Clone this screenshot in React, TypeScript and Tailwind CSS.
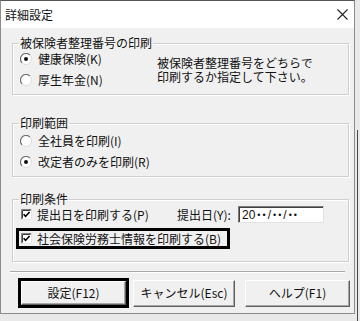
import React from "react";

function Radio({ checked }: { checked?: boolean }) {
  return (
    <svg width="12" height="12" viewBox="0 0 12 12" className="shrink-0">
      <circle cx="6" cy="6" r="5.5" fill="#ffffff" />
      <path d="M 2.1 9.9 A 5.5 5.5 0 0 1 9.9 2.1" stroke="#6e6e6e" strokeWidth="1.2" fill="none" />
      <path d="M 9.9 2.1 A 5.5 5.5 0 0 1 2.1 9.9" stroke="#dcdcdc" strokeWidth="1" fill="none" />
      {checked && <circle cx="6" cy="6" r="2" fill="#111" />}
    </svg>
  );
}

function Check() {
  return (
    <svg width="11" height="11" viewBox="0 0 11 11" className="shrink-0">
      <rect x="0" y="0" width="11" height="11" fill="#ffffff" />
      <path d="M0.5 10.5 V0.5 H10.5" stroke="#808080" fill="none" />
      <path d="M1.5 9.5 V1.5 H9.5" stroke="#3c3c3c" fill="none" />
      <path d="M10.5 0.5 V10.5 H0.5" stroke="#e6e6e6" fill="none" />
      <path d="M2.6 5.2 L4.6 7.4 L8.6 3" stroke="#000" strokeWidth="1.6" fill="none" />
    </svg>
  );
}

function Btn({ label, className }: { label: string; className: string }) {
  return (
    <div
      className={
        "flex items-center justify-center bg-[#f0f0f0] border border-t-white border-l-white border-r-[#5f5f5f] border-b-[#5f5f5f] shadow-[inset_-1px_-1px_0_#a8a8a8] text-[12px] leading-[14px] " +
        className
      }
    >
      {label}
    </div>
  );
}

export default function App() {
  return (
    <div className="w-[360px] h-[321px] bg-[#e9e9e9] flex font-['Noto_Sans_CJK_JP','Noto_Sans',sans-serif] text-[#111]">
      <div className="w-[355px] h-[314px] border border-[#8c8c8c] border-t-[#555] flex flex-col bg-[#f0f0f0]">
        {/* title bar */}
        <div className="h-[27px] bg-white flex items-center justify-between pl-[4px] pr-[6px] shrink-0">
          <span className="text-[12px] leading-[14px]">詳細設定</span>
          <svg width="11" height="11" viewBox="0 0 11 11">
            <path d="M0.5 0.5 L10.5 10.5 M10.5 0.5 L0.5 10.5" stroke="#222" strokeWidth="1.1" />
          </svg>
        </div>

        {/* group 1 */}
        <fieldset className="mt-[8px] ml-[11px] w-[337px] h-[59px] border border-[#cfcfcf] shadow-[inset_1px_1px_0_#fff,1px_1px_0_#fff] flex">
          <legend className="ml-[6px] px-[1px] text-[12px] leading-[14px]">被保険者整理番号の印刷</legend>
          <div className="flex w-full">
            <div className="w-[144px] pl-[7px] flex flex-col">
              <div className="h-[18px] flex items-center gap-[6px] text-[12px] leading-[14px]">
                <Radio checked />
                <span>健康保険(K)</span>
              </div>
              <div className="h-[18px] mt-[3px] flex items-center gap-[6px] text-[12px] leading-[14px]">
                <Radio />
                <span>厚生年金(N)</span>
              </div>
            </div>
            <div className="pt-[6px] text-[12px] leading-[14px] flex flex-col">
              <div className="h-[14px]">被保険者整理番号をどちらで</div>
              <div className="h-[14px]">印刷するか指定して下さい。</div>
            </div>
          </div>
        </fieldset>

        {/* group 2 */}
        <fieldset className="mt-[21px] ml-[11px] w-[337px] h-[61px] border border-[#cfcfcf] shadow-[inset_1px_1px_0_#fff,1px_1px_0_#fff]">
          <legend className="ml-[6px] px-[1px] text-[12px] leading-[14px]">印刷範囲</legend>
          <div className="pl-[7px] pt-[2px] flex flex-col">
            <div className="h-[18px] flex items-center gap-[6px] text-[12px] leading-[14px]">
              <Radio />
              <span>全社員を印刷(I)</span>
            </div>
            <div className="h-[18px] mt-[3px] flex items-center gap-[6px] text-[12px] leading-[14px]">
              <Radio checked />
              <span>改定者のみを印刷(R)</span>
            </div>
          </div>
        </fieldset>

        {/* group 3 */}
        <fieldset className="mt-[15px] ml-[11px] w-[337px] h-[70px] border border-[#cfcfcf] shadow-[inset_1px_1px_0_#fff,1px_1px_0_#fff]">
          <legend className="ml-[6px] px-[1px] text-[12px] leading-[14px]">印刷条件</legend>
          <div className="flex flex-col">
            <div className="h-[17px] flex items-center text-[12px] leading-[14px]">
              <div className="w-[164px] pl-[8px] flex items-center gap-[5px]">
                <Check />
                <span>提出日を印刷する(P)</span>
              </div>
              <span className="w-[61px]">提出日(Y):</span>
              <div className="w-[86px] h-[17px] bg-white border border-t-[#7a7a7a] border-l-[#7a7a7a] border-r-[#e3e3e3] border-b-[#e3e3e3] shadow-[inset_1px_1px_0_#404040] flex items-center pl-[3px] font-['Liberation_Sans',sans-serif] text-[12px] leading-[14px]">
                <span>20</span>
                <span className="text-[9px] tracking-[2px] pl-[2px]">••</span>
                <span>/</span>
                <span className="text-[9px] tracking-[2px] pl-[2px]">••</span>
                <span>/</span>
                <span className="text-[9px] tracking-[2px] pl-[2px]">••</span>
              </div>
            </div>
            <div className="mt-[5px] ml-[3px] w-[214px] h-[21px] border-[3px] border-black flex items-center pl-[2px] gap-[5px] text-[12px] leading-[14px]">
              <Check />
              <span>社会保険労務士情報を印刷する(B)</span>
            </div>
          </div>
        </fieldset>

        {/* separator */}
        <div className="mt-[9px] ml-[9px] w-[335px] h-[2px] border-t border-t-[#a9a9a9] border-b border-b-white" />

        {/* buttons */}
        <div className="mt-[5px] h-[30px] flex items-center">
          <div className="ml-[17px] w-[111px] h-[30px] border-[3px] border-black flex">
            <Btn label="設定(F12)" className="flex-1" />
          </div>
          <Btn label="キャンセル(Esc)" className="ml-[4px] w-[102px] h-[27px]" />
          <Btn label="ヘルプ(F1)" className="ml-[10px] w-[105px] h-[27px]" />
        </div>
      </div>
      <div className="flex-1 flex flex-col">
        <div className="h-[130px]" />
        <div className="ml-[2px] w-[1px] flex-1 bg-[#4a4a4a]" />
      </div>
    </div>
  );
}
